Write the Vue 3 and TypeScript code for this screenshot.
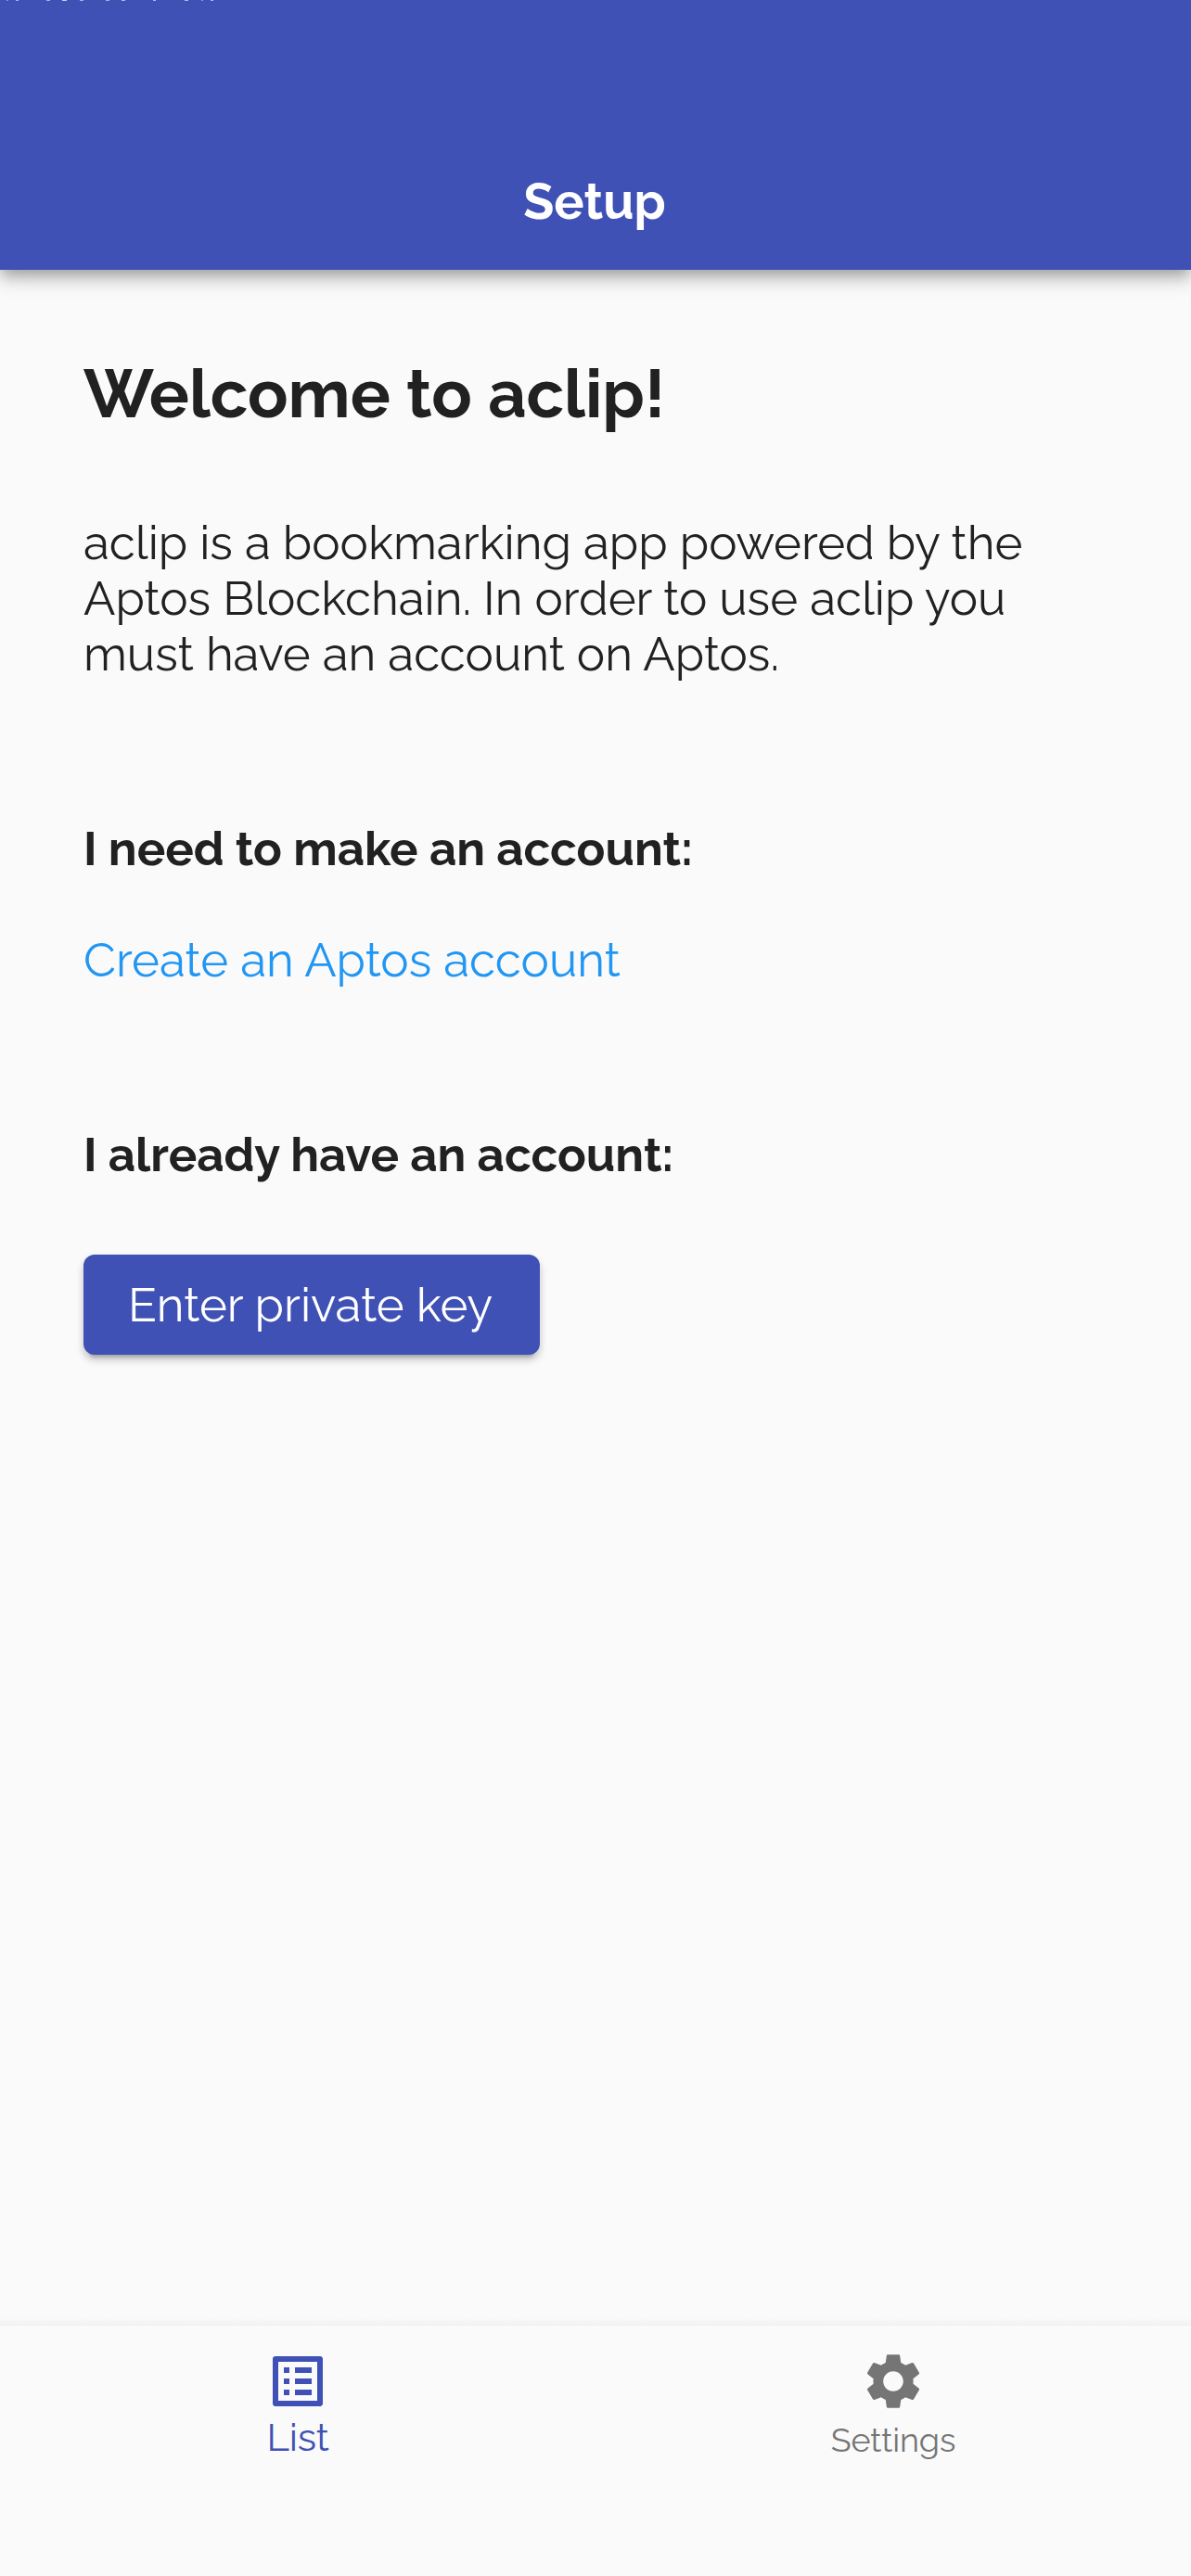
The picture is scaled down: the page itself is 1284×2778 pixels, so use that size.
<script setup lang="ts">
interface Speck {
  x: number
  w: number
  a: number
}

const intro: string[] = [
  'aclip is a bookmarking app powered by the',
  'Aptos Blockchain. In order to use aclip you',
  'must have an account on Aptos.',
]

// Remains of the status line that is scrolled off above the header
const specks: Speck[] = [
  { x: 7, w: 2, a: 0.4 },
  { x: 17, w: 3, a: 0.55 },
  { x: 50, w: 4, a: 0.55 },
  { x: 67, w: 5, a: 0.7 },
  { x: 86, w: 4, a: 0.55 },
  { x: 114, w: 4, a: 0.55 },
  { x: 131, w: 4, a: 0.6 },
  { x: 165, w: 3, a: 0.6 },
  { x: 199, w: 4, a: 0.6 },
  { x: 217, w: 2, a: 0.4 },
  { x: 227, w: 3, a: 0.6 },
]
</script>

<template>
  <div class="screen">
    <header class="app-bar">
      <i
        v-for="s in specks"
        :key="s.x"
        class="speck"
        :style="{ left: `${s.x}px`, width: `${s.w}px`, opacity: s.a }"
      ></i>
      <span class="title">Setup</span>
    </header>

    <main class="content">
      <h1>Welcome to aclip!</h1>
      <p class="intro">
        <span v-for="line in intro" :key="line" class="line">{{ line }}</span>
      </p>
      <h2>I need to make an account:</h2>
      <a class="link">Create an Aptos account</a>
      <h2>I already have an account:</h2>
      <button class="key-button" type="button">Enter private key</button>
    </main>

    <nav class="tabs">
      <div class="tab active">
        <svg viewBox="0 0 24 24" fill="currentColor">
          <path
            d="M19 5v14H5V5h14m1.1-2H3.9c-.5 0-.9.4-.9.9v16.2c0 .4.4.9.9.9h16.2c.4 0 .9-.5.9-.9V3.9c0-.5-.5-.9-.9-.9zM11 7h6v2h-6V7zm0 4h6v2h-6v-2zm0 4h6v2h-6v-2zM7 7h2v2H7V7zm0 4h2v2H7v-2zm0 4h2v2H7v-2z"
          />
        </svg>
        <span class="tab-label">List</span>
      </div>
      <div class="tab">
        <svg viewBox="0 0 24 24" fill="currentColor">
          <path
            d="M19.14 12.94c.04-.3.06-.61.06-.94 0-.32-.02-.64-.07-.94l2.03-1.58c.18-.14.23-.41.12-.61l-1.92-3.32c-.12-.22-.37-.29-.59-.22l-2.39.96c-.5-.38-1.03-.7-1.62-.94l-.36-2.54c-.04-.24-.24-.41-.48-.41h-3.84c-.24 0-.43.17-.47.41l-.36 2.54c-.59.24-1.13.57-1.62.94l-2.39-.96c-.22-.08-.47 0-.59.22L2.74 8.87c-.12.21-.08.47.12.61l2.03 1.58c-.05.3-.07.62-.07.94s.02.64.07.94l-2.03 1.58c-.18.14-.23.41-.12.61l1.92 3.32c.12.22.37.29.59.22l2.39-.96c.5.38 1.03.7 1.62.94l.36 2.54c.05.24.24.41.48.41h3.84c.24 0 .44-.17.47-.41l.36-2.54c.59-.24 1.13-.56 1.62-.94l2.39.96c.22.08.47 0 .59-.22l1.92-3.32c.12-.22.07-.47-.12-.61l-2.01-1.58zM12 15.6c-1.98 0-3.6-1.62-3.6-3.6s1.62-3.6 3.6-3.6 3.6 1.62 3.6 3.6-1.62 3.6-3.6 3.6z"
          />
        </svg>
        <span class="tab-label">Settings</span>
      </div>
    </nav>
  </div>
</template>

<style>
body {
  margin: 0;
  background: #fafafa;
}
</style>

<style scoped>
.screen {
  display: flex;
  flex-direction: column;
  width: 1284px;
  height: 2778px;
  overflow: hidden;
  background: #fafafa;
  color: #212121;
  font-family: Raleway, Inter, sans-serif;
  font-weight: 400;
}

.app-bar {
  position: relative;
  display: flex;
  flex: none;
  align-items: flex-end;
  justify-content: center;
  box-sizing: border-box;
  height: 291px;
  padding: 0 2px 44px 0;
  background: #3f51b5;
  color: #fff;
  box-shadow:
    0 6px 12px -3px rgba(0, 0, 0, 0.2),
    0 12px 15px 0 rgba(0, 0, 0, 0.14),
    0 3px 30px 0 rgba(0, 0, 0, 0.12);
}

.speck {
  position: absolute;
  top: 0;
  height: 1px;
  background: #fff;
}

.title {
  font-size: 54px;
  font-weight: 700;
  line-height: 60px;
}

.content {
  display: flex;
  flex: 1;
  flex-direction: column;
  align-items: flex-start;
  padding: 91px 90px 0;
}

h1 {
  margin: 0;
  font-size: 72px;
  font-weight: 700;
  line-height: 85px;
}

.intro {
  margin: 88px 0 0;
  font-size: 51px;
  line-height: 60px;
}

.line {
  display: block;
  white-space: nowrap;
}

h2 {
  margin: 150px 0 0;
  font-size: 51px;
  font-weight: 700;
  line-height: 60px;
}

.link {
  margin-top: 60px;
  color: #2196f3;
  font-size: 51px;
  line-height: 60px;
}

.key-button {
  box-sizing: border-box;
  width: 492px;
  height: 108px;
  margin: 78px 0 0;
  padding: 0 0 0 48px;
  border: 0;
  border-radius: 12px;
  background: #3f51b5;
  color: #fff;
  font: inherit;
  font-size: 51px;
  line-height: 60px;
  text-align: left;
  white-space: nowrap;
  box-shadow:
    0 9px 3px -6px rgba(0, 0, 0, 0.15),
    0 6px 9px 0 rgba(0, 0, 0, 0.16),
    0 3px 9px 0 rgba(0, 0, 0, 0.08);
}

.tabs {
  display: flex;
  flex: none;
  box-sizing: border-box;
  height: 278px;
  background: linear-gradient(#fafafa, #f0f0f0 8px, #fafafa 8px);
}

.tab {
  display: flex;
  flex: 1;
  flex-direction: column;
  align-items: center;
  padding-top: 32px;
  color: #757575;
  font-size: 36px;
  line-height: 54px;
  letter-spacing: -0.1px;
}

.tab svg {
  width: 72px;
  height: 72px;
}

.tab.active {
  color: #3f51b5;
  font-size: 42px;
  line-height: 49px;
  letter-spacing: -0.2px;
}
</style>
